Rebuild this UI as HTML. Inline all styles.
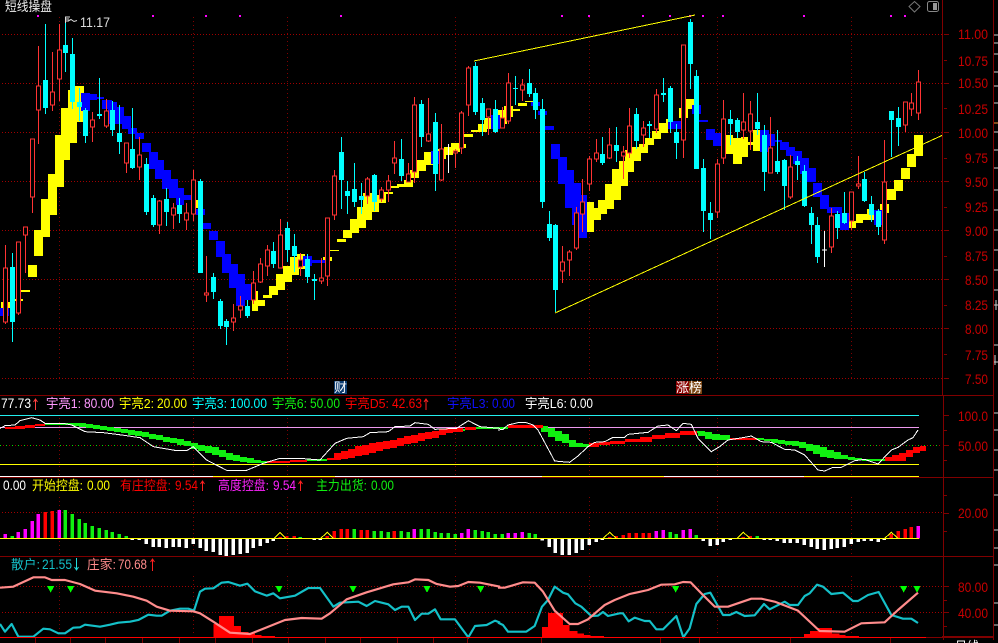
<!DOCTYPE html>
<html lang="zh">
<head>
<meta charset="utf-8">
<title>短线操盘</title>
<style>
html,body{margin:0;padding:0;background:#000;width:998px;height:643px;overflow:hidden}
svg{display:block}
text{font-family:"Liberation Sans","WenQuanYi Zen Hei","Noto Sans CJK SC",sans-serif;font-size:14px}
.c{font-family:"WenQuanYi Zen Hei","Liberation Sans","Noto Sans CJK SC",sans-serif;font-size:13px}
.a{fill:#c80000}
</style>
</head>
<body>
<svg width="998" height="643" viewBox="0 0 998 643" xmlns="http://www.w3.org/2000/svg">
<rect width="998" height="643" fill="#000"/>
<g shape-rendering="crispEdges" fill="none">
<!-- grid -->
<path stroke="#a00000" stroke-dasharray="1 2" d="M2 34.5H942M2 83.5H942M2 132.5H942M2 181.5H942M2 230.5H942M2 279.5H942M2 328.5H942M2 378.5H942M2 512.5H942M2 586.5H942M2 612.5H942"/>
<path stroke="#800000" stroke-dasharray="1 3" d="M59.5 17V381M193.5 17V381M287.5 17V381M455.5 17V381M589.5 17V381M717.5 17V381M851.5 17V381M59.5 418V476M193.5 418V476M287.5 418V476M455.5 418V476M589.5 418V476M717.5 418V476M851.5 418V476M59.5 497V555M193.5 497V555M287.5 497V555M455.5 497V555M589.5 497V555M717.5 497V555M851.5 497V555M59.5 576V636M193.5 576V636M287.5 576V636M455.5 576V636M589.5 576V636M717.5 576V636M851.5 576V636"/>
<!-- magenta dots -->
<path stroke="#ff00ff" stroke-width="2" d="M37 16h2M152 16h2M205 16h2M239 16h2M340 16h2M561 16h2M588 16h2M642 16h2M669 16h2M689 16h2M702 16h2M722 16h2M803 16h2M890 16h2M904 16h2"/>
<!-- ribbon yellow -->
<path fill="#ffff00" d="M1 302H10V308H1zM15 299H23V301H15zM21 290H30V292H21zM28 265H37V277H28zM34 230H43V256H34zM41 215H50V237H41zM41 199H57V215H41zM48 174H57V199H48zM55 135H64V187H55zM61 108H70V160H61zM68 90H77V143H68zM75 86H84V122H75zM196 200H203V208H196zM252 291H258V311H252zM258 300H265V306H258zM263 295H272V298H263zM269 286H278V295H269zM276 274H285V290H276zM283 266H292V282H283zM290 257H299V275H290zM297 254H305V269H297zM323 257H332V261H323zM330 250H339V251H330zM337 239H346V242H337zM343 230H352V238H343zM350 219H359V233H350zM357 207H366V228H357zM363 193H372V220H363zM372 195H379V212H372zM379 192H386V203H379zM386 192H393V194H386zM390 186H399V188H390zM397 184H406V187H397zM404 180H413V187H404zM410 170H419V178H410zM417 160H426V171H417zM424 152H433V165H424zM438 149H446V159H438zM444 147H453V155H444zM451 143H460V152H451zM457 144H466V148H457zM464 134H473V137H464zM471 130H480V132H471zM478 124H487V132H478zM484 118H493V129H484zM498 110H507V124H498zM504 106H513V117H504zM513 109H520V111H513zM518 103H527V106H518zM525 101H533V102H525zM587 202H594V232H587zM594 208H601V220H594zM598 200H607V214H598zM605 184H614V209H605zM612 169H621V200H612zM619 161H628V186H619zM625 150H634V172H625zM632 147H641V161H632zM639 144H648V153H639zM645 138H654V145H645zM652 131H661V139H652zM659 123H668V133H659zM666 119H672V129H666zM679 108H688V118H679zM686 99H694V109H686zM726 135H733V154H726zM733 138H742V164H733zM741 137H748V157H741zM748 142H753V145H748zM753 130H760V151H753zM849 221H856V228H849zM856 214H863V223H856zM863 214H874V220H863zM867 209H874V215H867zM880 204H889V213H880zM887 189H896V200H887zM894 180H903V191H894zM901 168H910V179H901zM907 154H916V167H907zM914 135H923V156H914z"/>
<!-- ribbon blue -->
<path fill="#0000ff" d="M0 308H9V316H0zM81 93H90V111H81zM90 94H97V100H90zM97 97H104V99H97zM102 100H112V109H102zM108 102H117V124H108zM115 107H124V124H115zM122 116H131V129H122zM128 128H137V134H128zM135 133H144V139H135zM142 143H151V152H142zM149 152H158V169H149zM155 160H164V179H155zM162 170H171V189H162zM169 179H178V198H169zM176 188H184V205H176zM184 195H191V200H184zM196 209H205V215H196zM203 223H211V229H203zM209 231H218V240H209zM216 241H225V257H216zM222 254H231V273H222zM229 264H238V288H229zM236 274H245V306H236zM245 284H252V300H245zM303 256H312V266H303zM312 260H325V263H312zM431 151H439V164H431zM491 115H500V129H491zM531 102H540V106H531zM538 111H547V115H538zM545 126H554V130H545zM551 144H560V159H551zM558 157H567V184H558zM565 183H581V208H565zM565 170H574V184H565zM572 195H587V225H572zM579 225H587V238H579zM668 121H681V129H668zM692 105H701V114H692zM699 120H708V122H699zM706 129H715V140H706zM713 133H722V146H713zM760 130H769V152H760zM769 134H775V146H769zM775 140H782V142H775zM780 142H789V150H780zM786 147H795V156H786zM793 151H802V164H793zM800 158H809V174H800zM807 168H816V182H807zM813 183H822V197H813zM820 195H829V209H820zM827 207H842V213H827zM840 213H849V230H840zM874 210H882V225H874z"/>
<!-- red wicks -->
<path stroke="#ff3333" d="M5.5 245V324M18.5 242V315M25.5 227V273M32.5 139V213M38.5 46V144M52.5 52V111M59.5 24V101M92.5 112V142M106.5 99V128M126.5 143V173M139.5 137V180M159.5 200V234M173.5 203V229M186.5 203V230M193.5 170V221M206.5 256V302M233.5 304V331M240.5 296V318M253.5 271V304M260.5 258V283M267.5 245V276M280.5 219V268M300.5 253V276M321.5 258V284M327.5 218V286M334.5 170V220M367.5 177V204M381.5 187V202M388.5 175V202M394.5 141V174M408.5 163V182M414.5 97V183M428.5 98V142M441.5 124V181M455.5 149V168M461.5 111V154M468.5 66V116M488.5 109V135M502.5 107V128M508.5 73V124M522.5 79V101M562.5 246V283M569.5 250V276M576.5 207V250M582.5 179V232M589.5 156V191M596.5 139V162M609.5 128V159M623.5 146V179M629.5 108V158M643.5 121V147M656.5 89V133M683.5 45V158M717.5 159V218M723.5 100V164M743.5 93V139M750.5 101V150M770.5 117V173M790.5 155V199M831.5 208V253M851.5 192V230M858.5 156V189M884.5 140V244M905.5 102V132M911.5 93V116M918.5 70V120"/>
<!-- red bodies -->
<path stroke="#ff3333" fill="#000" d="M3.5 268h4V322h-4zM16.5 242h4V313h-4zM23.5 227h4V235h-4zM30.5 139h4V197h-4zM36.5 86h4V110h-4zM50.5 92h4V105h-4zM57.5 50h4V79h-4zM90.5 120h4V127h-4zM104.5 111h4V126h-4zM124.5 143h4V163h-4zM137.5 155h4V167h-4zM157.5 201h4V225h-4zM171.5 208h4V215h-4zM184.5 213h4V220h-4zM191.5 180h4V214h-4zM204.5 293h4V295h-4zM231.5 318h4V322h-4zM238.5 306h4V310h-4zM251.5 283h4V300h-4zM258.5 264h4V282h-4zM265.5 250h4V266h-4zM278.5 235h4V268h-4zM298.5 260h4V267h-4zM319.5 278h4V281h-4zM325.5 218h4V276h-4zM332.5 176h4V215h-4zM365.5 179h4V196h-4zM379.5 190h4V199h-4zM386.5 181h4V190h-4zM392.5 158h4V163h-4zM406.5 174h4V182h-4zM412.5 105h4V172h-4zM426.5 134h4V141h-4zM439.5 149h4V180h-4zM453.5 151h4V153h-4zM459.5 113h4V148h-4zM466.5 68h4V105h-4zM486.5 109h4V117h-4zM500.5 118h4V128h-4zM506.5 83h4V121h-4zM520.5 85h4V90h-4zM560.5 262h4V271h-4zM567.5 252h4V260h-4zM574.5 213h4V248h-4zM580.5 202h4V214h-4zM587.5 159h4V184h-4zM594.5 153h4V159h-4zM607.5 145h4V158h-4zM621.5 152h4V156h-4zM627.5 126h4V153h-4zM641.5 128h4V135h-4zM654.5 95h4V129h-4zM681.5 45h4V140h-4zM715.5 164h4V212h-4zM721.5 119h4V158h-4zM741.5 122h4V130h-4zM748.5 114h4V131h-4zM768.5 148h4V173h-4zM788.5 167h4V197h-4zM829.5 216h4V247h-4zM849.5 192h4V221h-4zM856.5 184h4V186h-4zM882.5 182h4V240h-4zM903.5 102h4V125h-4zM909.5 103h4V109h-4zM916.5 82h4V113h-4z"/>
<!-- cyan wicks -->
<path stroke="#00ffff" d="M12.5 253V342M45.5 24V114M65.5 20V72M72.5 38V109M79.5 88V121M85.5 108V143M99.5 78V119M112.5 101V136M119.5 105V154M132.5 108V169M146.5 158V215M153.5 195V227M166.5 188V226M179.5 198V223M200.5 179V273M213.5 273V299M220.5 299V329M226.5 319V345M247.5 300V318M273.5 242V268M287.5 222V262M294.5 234V272M307.5 254V283M314.5 274V300M341.5 137V209M347.5 181V214M354.5 163V207M361.5 183V214M374.5 174V211M401.5 139V181M421.5 100V147M435.5 113V191M475.5 62V115M482.5 98V136M495.5 100V133M515.5 76V105M529.5 69V97M535.5 88V119M542.5 99V208M549.5 211V241M555.5 224V312M602.5 137V165M616.5 127V162M636.5 108V149M649.5 121V138M663.5 78V102M670.5 86V133M676.5 124V159M690.5 19V89M696.5 70V169M703.5 159V232M710.5 202V239M730.5 110V145M737.5 118V138M757.5 93V135M764.5 125V191M777.5 130V174M784.5 159V210M797.5 156V180M804.5 165V207M811.5 207V244M817.5 217V263M837.5 211V239M844.5 192V224M864.5 172V202M871.5 196V222M878.5 209V235M891.5 111V157M898.5 107V146"/>
<!-- cyan bodies -->
<path stroke="#00ffff" stroke-width="5" d="M12.5 267V322M45.5 80V108M65.5 45V53M72.5 54V102M79.5 102V107M85.5 110V136M99.5 114V116M112.5 110V130M119.5 133V142M132.5 149V168M146.5 164V212M153.5 198V225M166.5 199V212M179.5 205V214M200.5 181V273M213.5 277V292M220.5 301V326M226.5 321V327M247.5 306V316M273.5 251V264M287.5 228V250M294.5 246V256M307.5 259V277M314.5 279V281M341.5 152V180M347.5 191V196M354.5 189V202M361.5 196V200M374.5 175V202M401.5 159V176M421.5 104V137M435.5 122V174M475.5 66V112M482.5 103V120M495.5 109V132M515.5 88V89M529.5 83V94M535.5 93V110M542.5 109V202M549.5 224V238M555.5 225V290M602.5 154V163M616.5 145V151M636.5 114V141M649.5 124V126M663.5 93V95M670.5 88V122M676.5 132V143M690.5 22V64M696.5 76V169M703.5 168V211M710.5 213V220M730.5 119V124M737.5 120V132M757.5 122V129M764.5 135V172M777.5 161V172M784.5 160V186M797.5 161V165M804.5 171V206M811.5 213V225M817.5 225V257M837.5 214V228M844.5 213V223M864.5 179V201M871.5 204V215M878.5 211V227M891.5 111V120M898.5 118V127"/>
<!-- white doji -->
<path stroke="#fff" d="M448.5 144V173M824.5 231V267M822 250h5"/>
<!-- trend lines -->
<path stroke="#ffff00" d="M474 61L695 15M555 313L943 135"/>
<!-- panel 2 reference lines -->
<path stroke="#22eeee" d="M0 415.5H919"/>
<path stroke="#ee99ee" d="M0 427.5H919"/>
<path stroke="#00e000" stroke-dasharray="1 5" d="M0 445.5H942"/>
<path stroke="#a00000" stroke-dasharray="1 5" stroke-dashoffset="3" d="M0 445.5H942"/>
<path stroke="#ffff00" d="M0 464.5H919"/>
<path stroke="#ffffff" d="M0 476.5H213M335 476.5H542M664 476.5H804"/>
<path stroke="#ffff00" d="M213 476.5H335M542 476.5H664M804 476.5H919"/>
<!-- panel 2 ribbon -->
<path fill="#10f010" d="M45 424H65V425H45zM65 423h7v2h-7zM72 423h7v3h-7zM79 423h7v4h-7zM86 424h7v4h-7zM93 425h7v4h-7zM100 426h7v4h-7zM107 427h7v4h-7zM114 428h7v4h-7zM121 429h7v4h-7zM128 430h7v5h-7zM135 431h7v5h-7zM142 432h7v5h-7zM149 434h7v5h-7zM156 435h7v5h-7zM163 437h7v5h-7zM170 438h7v5h-7zM177 439h7v6h-7zM184 441h7v5h-7zM191 443h7v6h-7zM198 445h7v6h-7zM205 446h7v7h-7zM212 447h7v8h-7zM219 450h7v7h-7zM226 453h7v7h-7zM233 455h7v6h-7zM240 457h7v5h-7zM247 458h7v5h-7zM254 460h7v3h-7zM261 461h6v2h-6zM307 459H327V461H307zM447 429H465V431H447zM476 427H508V429H476zM541 426h7v6h-7zM548 428h7v9h-7zM555 431h7v10h-7zM562 434h7v9h-7zM569 440h7v7h-7zM576 443h7v4h-7zM583 444h6v3h-6zM690 431h8v2h-8zM698 431h7v5h-7zM705 432h7v7h-7zM712 434h8v6h-8zM720 435h10v5h-10zM757 438h7v2h-7zM764 439h7v2h-7zM771 439h7v4h-7zM778 440h7v4h-7zM785 441h7v4h-7zM792 441h7v5h-7zM799 442h7v6h-7zM806 444h7v7h-7zM813 445h7v9h-7zM820 447h7v10h-7zM827 450h7v8h-7zM834 452h7v7h-7zM841 455h7v4h-7zM848 457h7v3h-7zM855 458h7v2h-7zM862 459h23v2h-23z"/>
<path fill="#ff0000" d="M5 427h10v2h-10zM15 426h10v3h-10zM25 425h10v3h-10zM35 424h10v2h-10zM267 461h23v2h-23zM290 460h17v2h-17zM327 458h7v2h-7zM334 453h7v7h-7zM341 451h7v8h-7zM348 449h7v9h-7zM355 446h7v10h-7zM362 445h7v10h-7zM369 443h7v10h-7zM376 442h7v9h-7zM383 441h7v8h-7zM390 440h7v8h-7zM397 438h7v8h-7zM404 436h7v8h-7zM411 435h7v8h-7zM418 433h7v8h-7zM425 432h7v7h-7zM432 431h7v7h-7zM439 429h7v6h-7zM446 428h7v5h-7zM453 428h10v4h-10zM465 427H476V430H465zM508 425H543V428H508zM589 443h10v4h-10zM599 442h11v3h-11zM610 441h15v3h-15zM625 439h15v3h-15zM640 437h12v5h-12zM652 435h13v4h-13zM665 433h15v5h-15zM680 431h17v4h-17zM730 438H757V440H730zM885 457h7v4h-7zM892 455h7v6h-7zM899 453h7v8h-7zM906 450h7v7h-7zM913 447h7v6h-7zM920 446h6v5h-6z"/>
<!-- panel 2 white curve -->
<g transform="translate(0 390) scale(.33333)">
<polyline stroke="#fff" stroke-width="3" points="0,115 15,107 45,105 60,92 95,83 120,90 135,100 190,100 215,105 255,125 310,128 365,135 420,143 460,170 530,182 560,182 580,170 620,210 680,241 740,241 790,220 840,205 900,205 960,210 1005,160 1040,145 1090,140 1110,128 1165,125 1185,110 1230,108 1245,98 1285,103 1305,118 1370,115 1405,92 1440,110 1500,115"/>
</g>
<g transform="translate(498 390) scale(.33333)">
<polyline stroke="#fff" stroke-width="3" points="0,120 15,118 30,105 60,98 85,98 105,105 120,120 170,213 215,217 240,198 270,170 290,157 320,155 345,142 380,142 390,133 450,127 480,108 510,105 535,122 555,100 580,103 600,145 640,185 665,170 690,150 740,142 760,138 790,155 820,157 860,178 890,180 920,195 960,240 980,243 1005,232 1030,232 1070,212 1100,208 1140,222 1180,180 1200,172 1230,150 1245,143 1260,120"/>
</g>
<!-- panel 3 bars -->
<g transform="translate(0 390) scale(.33333)" stroke-width="10">
<path stroke="#fff" d="M397 445V450M418 445V450M439 445V462M460 445V471M478 445V471M499 445V474M520 445V471M538 445V471M559 445V474M580 445V462M601 445V474M619 445V483M640 445V486M661 445V495M679 445V498M700 445V495M721 445V492M742 445V489M760 445V474M781 445V468M802 445V459M820 445V453M943 445V450M961 445V450"/>
<path stroke="#ff00ff" d="M16 445V432M55 445V426M76 445V417M97 445V393M115 445V372M178 445V360M1243 445V417M1385 445V429M1405 445V417"/>
<path stroke="#ff0000" d="M136 445V366M157 445V363M861 445V438M883 445V438M1003 445V423M1024 445V417M1042 445V417M1084 445V420M1102 445V420M1183 445V423M841 447V441M982 445V438"/>
<path stroke="#10f010" d="M37 445V438M196 445V360M217 445V372M238 445V387M256 445V399M277 445V408M298 445V414M319 445V420M337 445V426M358 445V432M379 445V438M901 445V441M922 445V444M1063 445V417M1123 445V423M1144 445V423M1165 445V426M1204 445V423M1225 445V426M1264 445V417M1285 445V417M1306 445V426M1324 445V429M1345 445V429M1366 445V432M1426 445V420M1447 445V423M1465 445V426M1486 445V432"/>
</g>
<g transform="translate(498 390) scale(.33333)" stroke-width="10">
<path stroke="#fff" d="M133 445V452M154 445V471M172 445V489M193 445V495M214 445V495M235 445V489M253 445V480M274 445V465M295 445V456M313 445V450M616 445V453M637 445V468M658 445V465M676 445V456M697 445V450M799 445V450M817 445V450M838 445V453M859 445V459M877 445V459M898 445V459M919 445V465M940 445V471M958 445V477M979 445V480M1000 445V477M1018 445V474M1039 445V471M1060 445V462M1081 445V456M1099 445V453M1120 445V453M1141 445V456M1159 445V450"/>
<path stroke="#ff00ff" d="M31 445V429M52 445V429M73 445V426M475 445V423M496 445V420M556 445V420M577 445V417M1261 445V408"/>
<path stroke="#ff0000" d="M335 447V441M355 445V438M376 445V435M394 445V429M415 445V429M436 445V429M454 445V429M736 447V441M757 445V438M1180 445V432M1201 445V423M1222 445V417M1240 445V411"/>
<path stroke="#10f010" d="M13 445V432M94 445V429M112 445V432M517 445V426M535 445V432M595 445V435M778 445V438"/>
</g>
<path stroke="#ffff00" d="M0 538.5H919"/>
<g transform="translate(0 390) scale(.33333)" stroke="#ffff00" stroke-width="3">
<polyline points="822,445 840,427 858,445"/><polyline points="962,445 982,427 1000,445"/>
</g>
<g transform="translate(498 390) scale(.33333)" stroke="#ffff00" stroke-width="3">
<polyline points="315,445 335,427 355,445"/><polyline points="718,445 736,427 756,445"/><polyline points="1160,445 1180,427 1200,445"/>
</g>
<!-- panel 4 -->
<g transform="translate(0 550) scale(.33333)">
<path fill="#ff0000" d="M640 222H657V262H640zM657 198H702V262H657zM702 228H723V262H702zM723 246H745V262H723zM745 250H765V262H745zM765 255H785V262H765zM785 258H825V262H785z"/>
<g shape-rendering="auto" stroke-width="6.5" stroke-linejoin="round">
<polyline stroke="#14c0c8" points="0,222 15,245 35,222 55,260 100,260 130,236 150,238 175,250 195,250 220,233 240,232 255,224 300,230 330,224 355,218 390,215 415,210 445,194 470,197 485,197 510,182 540,176 565,176 582,182 600,125 615,116 640,115 665,98 685,96 720,107 742,101 765,124 800,137 820,130 840,145 885,137 925,114 960,114 1000,170 1020,158 1075,155 1100,168 1125,153 1165,163 1185,180 1205,170 1225,170 1245,210 1265,191 1285,191 1305,178 1322,208 1365,208 1405,262 1425,228 1460,225 1485,212 1500,218"/>
<polyline stroke="#ff8c8c" points="0,113 40,110 100,82 135,82 155,90 195,90 240,102 285,122 350,130 400,140 440,152 470,170 510,182 580,184 600,190 640,215 690,248 750,252 800,232 855,210 905,204 965,206 990,190 1040,148 1100,127 1180,103 1225,97 1245,88 1285,90 1310,102 1350,110 1375,108 1405,96 1440,98 1500,110"/>
</g>
<path fill="#00ff00" d="M141 108H163L152 128zM201 108H223L212 128zM826 108H848L837 128zM1048 108H1070L1059 128zM1270 108H1292L1281 128zM1431 108H1453L1442 128z"/>
</g>
<g transform="translate(498 550) scale(.33333)">
<path fill="#ff0000" d="M132 231H150V262H132zM150 189H195V262H150zM195 225H215V262H195zM215 243H238V262H215zM238 250H258V262H238zM258 255H278V262H258zM278 258H318V262H278zM918 252H936V262H918zM936 243H960V262H936zM960 234H1002V262H960zM1002 250H1025V262H1002zM1025 255H1043V262H1025zM1043 258H1083V262H1043z"/>
<g shape-rendering="auto" stroke-width="6.5" stroke-linejoin="round">
<polyline stroke="#14c0c8" points="0,218 15,225 30,245 85,245 110,228 132,170 150,150 170,110 195,128 210,133 232,160 250,170 280,198 300,197 315,186 330,198 365,190 375,190 392,214 410,203 440,213 455,213 475,238 495,238 535,198 556,262 575,235 595,162 620,132 637,128 675,195 695,195 715,186 740,198 770,196 798,162 815,178 860,155 875,165 900,165 920,138 935,130 957,104 975,110 1000,132 1035,128 1065,153 1080,153 1110,135 1142,126 1180,195 1215,206 1240,206 1260,219"/>
<polyline stroke="#ff8c8c" points="0,113 20,113 75,97 110,98 135,125 170,182 215,222 240,222 270,208 320,165 350,150 395,132 450,120 490,104 530,103 555,96 578,97 610,130 650,170 690,170 760,146 790,146 830,155 900,182 965,243 1040,245 1090,220 1160,217 1200,180 1260,128"/>
</g>
<path fill="#00ff00" d="M522 108H544L533 128zM1206 108H1228L1217 128zM1246 108H1268L1257 128z"/>
</g>
<!-- frame lines -->
<path stroke="#800000" d="M0 395.5H943M0 477.5H943M0 556.5H993M942.5 0V395M943.5 395V640M993.5 0V640M0 637.5H993M943 395.5H993M943 477.5H993M943 556.5H993"/>
<path stroke="#800000" d="M944 34.5h5M944 83.5h5M944 132.5h5M944 181.5h5M944 230.5h5M944 279.5h5M944 328.5h5M944 378.5h5M944 60.5h3M944 108.5h3M944 158.5h3M944 207.5h3M944 256.5h3M944 305.5h3M944 354.5h3M944 415.5h5M944 430.5h3M944 445.5h5M944 460.5h3M944 495.5h3M944 513.5h5M944 531.5h3M944 586.5h5M944 600.5h3M944 612.5h5M944 626.5h3"/>
<path stroke="#800000" stroke-width="2" d="M942 637H994"/>
<path stroke="#ff0000" stroke-width="1" d="M0 637.5H926"/>
<path stroke="#800000" d="M35.5 638V643M70.5 638V643M105.5 638V643M142.5 638V643M179.5 638V643M215.5 638V643M252.5 638V643M288.5 638V643M325.5 638V643M360.5 638V643M397.5 638V643M433.5 638V643M467.5 638V643M541.5 638V643M660.5 638V643M699.5 638V643M790.5 638V643M890.5 638V643"/>
<!-- right strip ticks -->
<path stroke="#cfcfcf" d="M994 35h4M994 43h4M994 54h4M994 72h4M994 86h4M994 103h4M994 132h4M994 150h4M994 168h4M994 190h4M994 210h4M994 230h4M994 250h4M994 270h4M994 290h4M994 305h4M994 345h4M994 362h4M994 413h4M994 430h4M994 450h4M994 470h4M994 495h4M994 530h4M994 548h4M994 565h4M994 603h4M994 625h4"/>
<path stroke="#ff9933" d="M994 123h4"/>
<path stroke="#cfcfcf" d="M995 355V365M996 300V310"/>
<!-- badges -->
<rect x="334" y="381" width="13" height="13" fill="#0c3c70"/>
<rect x="676" y="381" width="13" height="13" fill="#8a0000"/>
<rect x="689" y="381" width="13" height="13" fill="#7a4410"/>
</g>
<!-- flag icon -->
<path d="M65.5 23V17H70M65.5 19H69M65.5 21H69M68 21L71 19.5L74 21.5L77 20.5" fill="none" stroke="#ddd" stroke-width="1"/>
<!-- top right icons -->
<path d="M914.5 1.5L920 6.5L914.5 12L909 6.5Z" fill="none" stroke="#777" stroke-width="1"/>
<rect x="927.5" y="1.5" width="11" height="10" rx="2" fill="none" stroke="#888"/>
<rect x="933" y="3" width="4" height="7" fill="#999"/>
<!-- arrows -->
<g fill="none" stroke-width="1">
<path stroke="#ff4040" d="M35.5 399V410M33.5 402L35.5 399L37.5 402"/>
<path stroke="#ff2020" d="M426 399V410M424 402L426 399L428 402"/>
<path stroke="#ff2020" d="M202.5 481V491M200.5 484L202.5 481L204.5 484"/>
<path stroke="#ff2020" d="M300.5 481V491M298.5 484L300.5 481L302.5 484"/>
<path stroke="#22dddd" d="M76.5 558V570M74.5 567L76.5 570L78.5 567"/>
<path stroke="#ff2020" d="M152.5 559V571M150.5 562L152.5 559L154.5 562"/>
</g>
<!-- text -->
<text class="c" x="5" y="11" fill="#eee" textLength="47" lengthAdjust="spacingAndGlyphs">短线操盘</text>
<text x="80" y="27" fill="#ddd" textLength="30" lengthAdjust="spacingAndGlyphs">11.17</text>
<text class="c" x="340.5" y="392" fill="#fff" text-anchor="middle">财</text>
<text class="c" x="682.5" y="392" fill="#fff" text-anchor="middle">涨</text>
<text class="c" x="695.5" y="392" fill="#fff" text-anchor="middle">榜</text>
<!-- axis -->
<g class="a">
<text class="a" x="958" y="39" textLength="30" lengthAdjust="spacingAndGlyphs">11.00</text>
<text class="a" x="958" y="66" textLength="30" lengthAdjust="spacingAndGlyphs">10.75</text>
<text class="a" x="958" y="88" textLength="30" lengthAdjust="spacingAndGlyphs">10.50</text>
<text class="a" x="958" y="114" textLength="30" lengthAdjust="spacingAndGlyphs">10.25</text>
<text class="a" x="958" y="138" textLength="30" lengthAdjust="spacingAndGlyphs">10.00</text>
<text class="a" x="965" y="163" textLength="23" lengthAdjust="spacingAndGlyphs">9.75</text>
<text class="a" x="965" y="187" textLength="23" lengthAdjust="spacingAndGlyphs">9.50</text>
<text class="a" x="965" y="212" textLength="23" lengthAdjust="spacingAndGlyphs">9.25</text>
<text class="a" x="965" y="236" textLength="23" lengthAdjust="spacingAndGlyphs">9.00</text>
<text class="a" x="965" y="261" textLength="23" lengthAdjust="spacingAndGlyphs">8.75</text>
<text class="a" x="965" y="285" textLength="23" lengthAdjust="spacingAndGlyphs">8.50</text>
<text class="a" x="965" y="310" textLength="23" lengthAdjust="spacingAndGlyphs">8.25</text>
<text class="a" x="965" y="334" textLength="23" lengthAdjust="spacingAndGlyphs">8.00</text>
<text class="a" x="965" y="360" textLength="23" lengthAdjust="spacingAndGlyphs">7.75</text>
<text class="a" x="965" y="384" textLength="23" lengthAdjust="spacingAndGlyphs">7.50</text>
<text class="a" x="958" y="421" textLength="30" lengthAdjust="spacingAndGlyphs">100.0</text>
<text class="a" x="958" y="451" textLength="30" lengthAdjust="spacingAndGlyphs">50.00</text>
<text class="a" x="958" y="518" textLength="30" lengthAdjust="spacingAndGlyphs">20.00</text>
<text class="a" x="958" y="592" textLength="30" lengthAdjust="spacingAndGlyphs">80.00</text>
<text class="a" x="958" y="618" textLength="30" lengthAdjust="spacingAndGlyphs">40.00</text>
</g>
<!-- panel 2 header -->
<text x="1" y="408" fill="#fff" textLength="30" lengthAdjust="spacingAndGlyphs">77.73</text>
<text class="c" x="46" y="408" fill="#ff99ff" textLength="35" lengthAdjust="spacingAndGlyphs">宇亮1:</text>
<text x="84" y="408" fill="#ff99ff" textLength="30" lengthAdjust="spacingAndGlyphs">80.00</text>
<text class="c" x="119" y="408" fill="#ffff00" textLength="35" lengthAdjust="spacingAndGlyphs">宇亮2:</text>
<text x="157" y="408" fill="#ffff00" textLength="30" lengthAdjust="spacingAndGlyphs">20.00</text>
<text class="c" x="192" y="408" fill="#00ffff" textLength="35" lengthAdjust="spacingAndGlyphs">宇亮3:</text>
<text x="230" y="408" fill="#00ffff" textLength="37" lengthAdjust="spacingAndGlyphs">100.00</text>
<text class="c" x="272" y="408" fill="#10f010" textLength="35" lengthAdjust="spacingAndGlyphs">宇亮6:</text>
<text x="310" y="408" fill="#10f010" textLength="30" lengthAdjust="spacingAndGlyphs">50.00</text>
<text class="c" x="345" y="408" fill="#ff0000" textLength="44" lengthAdjust="spacingAndGlyphs">宇亮D5:</text>
<text x="392" y="408" fill="#ff0000" textLength="30" lengthAdjust="spacingAndGlyphs">42.63</text>
<text class="c" x="447" y="408" fill="#1010ff" textLength="42" lengthAdjust="spacingAndGlyphs">宇亮L3:</text>
<text x="492" y="408" fill="#1010ff" textLength="23" lengthAdjust="spacingAndGlyphs">0.00</text>
<text class="c" x="525" y="408" fill="#fff" textLength="42" lengthAdjust="spacingAndGlyphs">宇亮L6:</text>
<text x="570" y="408" fill="#fff" textLength="23" lengthAdjust="spacingAndGlyphs">0.00</text>
<!-- panel 3 header -->
<text x="3" y="490" fill="#fff" textLength="23" lengthAdjust="spacingAndGlyphs">0.00</text>
<text class="c" x="32" y="490" fill="#ffff00" textLength="51" lengthAdjust="spacingAndGlyphs">开始控盘:</text>
<text x="87" y="490" fill="#ffff00" textLength="23" lengthAdjust="spacingAndGlyphs">0.00</text>
<text class="c" x="120" y="490" fill="#ff0000" textLength="51" lengthAdjust="spacingAndGlyphs">有庄控盘:</text>
<text x="175" y="490" fill="#ff0000" textLength="23" lengthAdjust="spacingAndGlyphs">9.54</text>
<text class="c" x="218" y="490" fill="#ff22ff" textLength="51" lengthAdjust="spacingAndGlyphs">高度控盘:</text>
<text x="273" y="490" fill="#ff22ff" textLength="23" lengthAdjust="spacingAndGlyphs">9.54</text>
<text class="c" x="316" y="490" fill="#10f010" textLength="51" lengthAdjust="spacingAndGlyphs">主力出货:</text>
<text x="371" y="490" fill="#10f010" textLength="23" lengthAdjust="spacingAndGlyphs">0.00</text>
<!-- panel 4 header -->
<text class="c" x="11" y="569" fill="#14c0c8" textLength="29" lengthAdjust="spacingAndGlyphs">散户:</text>
<text x="42" y="569" fill="#14c0c8" textLength="30" lengthAdjust="spacingAndGlyphs">21.55</text>
<text class="c" x="87" y="569" fill="#ff8c8c" textLength="29" lengthAdjust="spacingAndGlyphs">庄家:</text>
<text x="118" y="569" fill="#ff8c8c" textLength="29" lengthAdjust="spacingAndGlyphs">70.68</text>
<text class="c" x="955" y="651" fill="#fff" textLength="24" lengthAdjust="spacingAndGlyphs">日线</text>
</svg>
</body>
</html>
